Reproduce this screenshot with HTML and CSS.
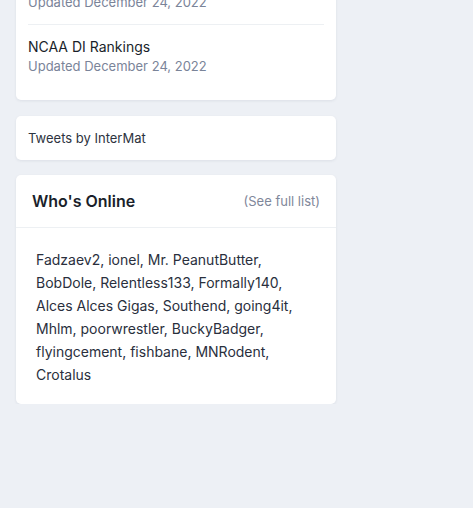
FILE: index.html
```html
<!DOCTYPE html>
<html>
<head>
<meta charset="utf-8">
<link rel="stylesheet" href="styles.css">
</head>
<body>
<div class="sidebar">
  <div class="card list-card">
    <div class="item">
      <div class="item-title">NCAA DII Rankings</div>
      <div class="item-meta">Updated December 24, 2022</div>
    </div>
    <div class="item">
      <div class="item-title">NCAA DI Rankings</div>
      <div class="item-meta">Updated December 24, 2022</div>
    </div>
  </div>
  <div class="card tweets-card">Tweets by InterMat</div>
  <div class="card online-card">
    <div class="online-head">
      <h3 class="online-title">Who's Online</h3>
      <a class="online-link">(See full list)</a>
    </div>
    <div class="online-body">Fadzaev2, ionel, Mr. PeanutButter, BobDole, Relentless133, Formally140, Alces Alces Gigas, Southend, going4it, Mhlm, poorwrestler, BuckyBadger, flyingcement, fishbane, MNRodent, Crotalus</div>
  </div>
</div>
</body>
</html>
```
FILE: styles.css
```css
html, body {
  margin: 0;
  padding: 0;
  background: #edf0f5;
  font-family: Inter, "Noto Sans", sans-serif;
  color: #1f2430;
}
.sidebar {
  width: 320px;
  margin: -51px 0 0 16px;
  display: flex;
  flex-direction: column;
  gap: 16px;
}
.card {
  background: #fff;
  border-radius: 5px;
  box-shadow: 0 1px 3px rgba(30, 40, 60, 0.08);
}
.list-card {
  padding: 12px 12px 12px;
}
.item {
  padding: 12px 0;
}
.item + .item {
  border-top: 1px solid #edf0f3;
}
.item-title {
  font-size: 14px;
  line-height: 19px;
  color: #1a1f2b;
}
.item-meta {
  font-size: 13px;
  line-height: 20px;
  color: #7a8499;
}
.tweets-card {
  padding: 12px;
  font-size: 13px;
  line-height: 20px;
  color: #2d3340;
}
.online-card {
  margin-top: -1px;
}
.online-head {
  display: flex;
  align-items: center;
  justify-content: space-between;
  padding: 0 16px;
  height: 52px;
  border-bottom: 1px solid #edf0f3;
}
.online-title {
  margin: 0;
  font-size: 16px;
  font-weight: 600;
  color: #1a1f2b;
}
.online-link {
  font-size: 13px;
  color: #7f879a;
}
.online-body {
  padding: 20px 20px 18px;
  font-size: 14px;
  line-height: 23px;
  color: #2a2f3d;
}
```
